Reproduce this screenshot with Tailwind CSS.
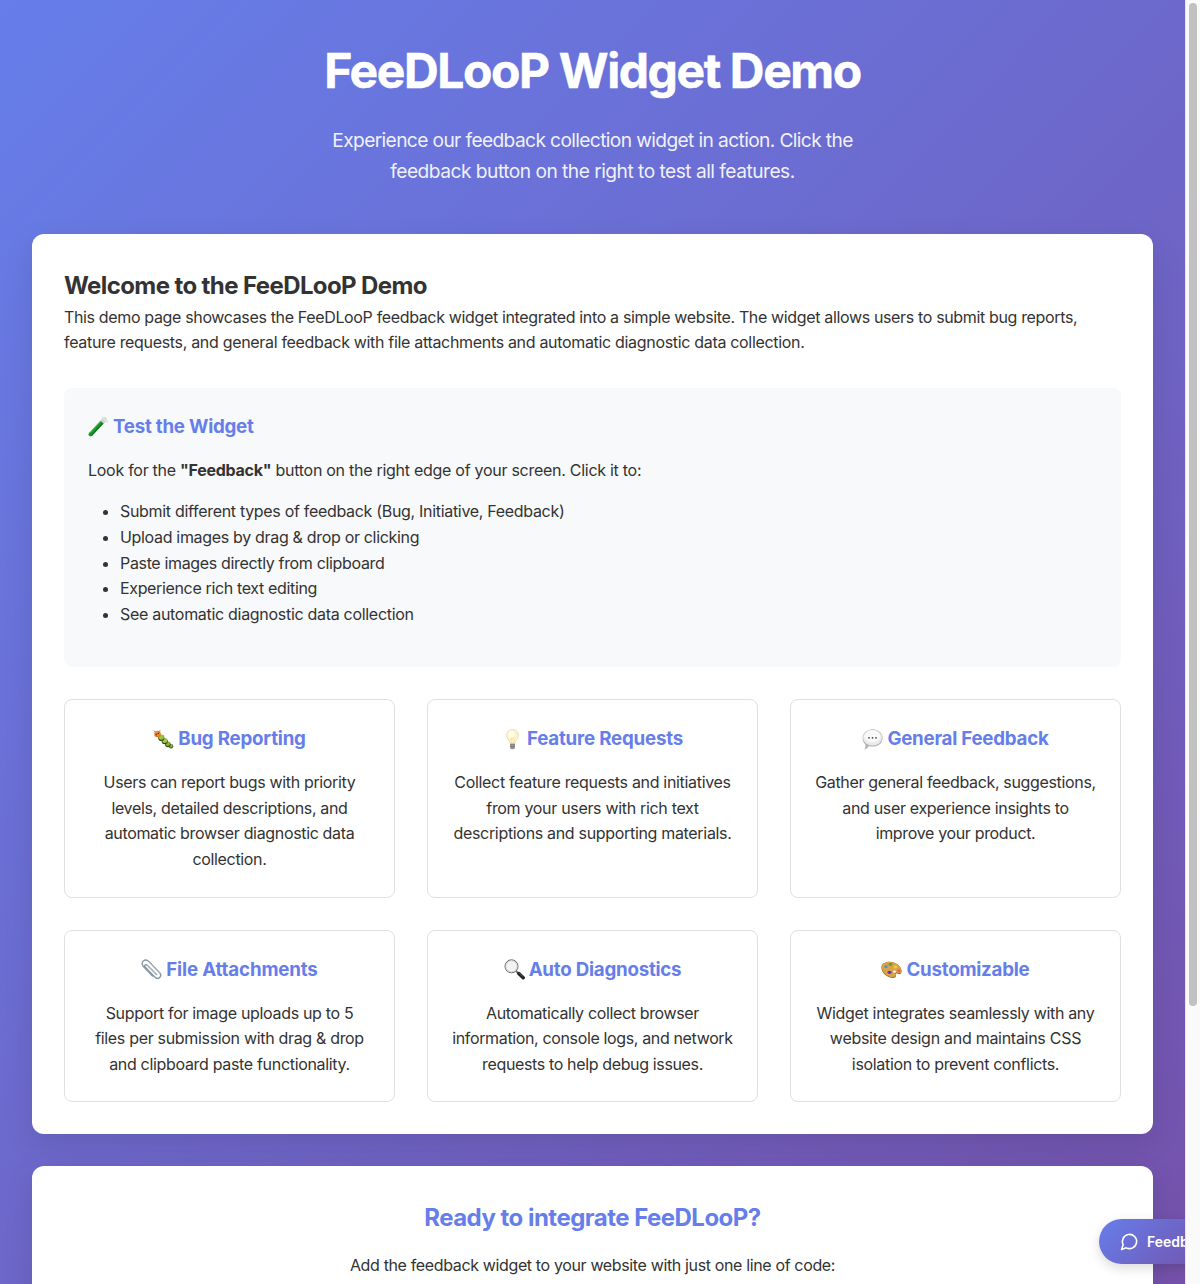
<!DOCTYPE html>
<html lang="en">
<head>
<meta charset="utf-8">
<title>FeeDLooP Widget Demo</title>
<script src="https://cdn.jsdelivr.net/npm/@tailwindcss/browser@4"></script>
</head>
<body class="flex h-[1284px] w-[1200px] overflow-hidden font-['Inter',sans-serif] text-base leading-[25.6px] tracking-[-0.32px] text-[#333]">
<div class="relative h-[1284px] w-[1185px] overflow-hidden">
<div class="h-[1640px] bg-[linear-gradient(135deg,#667eea_0%,#764ba2_100%)] p-8">
  <header class="mb-12 text-center text-white">
    <h1 class="mb-[15px] pt-px text-[48px] leading-[76.8px] font-bold tracking-[-1.4px] whitespace-nowrap [-webkit-text-stroke:0.5px_white]">FeeDLooP Widget Demo</h1>
    <p class="text-[19.2px] leading-[30.72px] tracking-[-0.63px] whitespace-nowrap opacity-90">Experience our feedback collection widget in action. Click the<br><span class="tracking-[-0.52px]">feedback button on the right to test all features.</span></p>
  </header>

  <main class="mb-8 rounded-xl bg-white p-8 shadow-[0_10px_30px_rgba(0,0,0,0.1)]">
    <h2 class="-mb-px pt-px text-2xl leading-[38.4px] font-bold tracking-[-0.6px]">Welcome to the FeeDLooP Demo</h2>
    <p class="whitespace-nowrap"><span class="tracking-[-0.35px]">This demo page showcases the FeeDLooP feedback widget integrated into a simple website. The widget allows users to submit bug reports,</span><br>feature requests, and general feedback with file attachments and automatic diagnostic data collection.</p>

    <section class="my-8 rounded-lg bg-[#f8f9fb] p-6">
      <h3 class="mb-4 flex items-center gap-[4px] text-[18.72px] leading-[29.95px] font-bold tracking-[-0.23px] text-[#667eea]">
        <svg class="size-[21px]" viewBox="0 0 21 21"><path d="M2.600 18.400 16.500 3.500" stroke="#ccd6d1" stroke-width="4.600" stroke-linecap="round"/><path d="M2.700 18.300 14 6.200" stroke="#179325" stroke-width="4"/><circle cx="2.700" cy="18.300" r="2" fill="#179325"/><path d="M1.900 16.800 12.800 5.200" stroke="#6bd066" stroke-width=".9"/><path d="M3.800 19.200 15 7.200" stroke="#0a6718" stroke-width="1"/><path d="m14.500 1.500 4.800 4.500" stroke="#dfe4df" stroke-width="1.800" stroke-linecap="round"/></svg>
        <span>Test the Widget</span>
      </h3>
      <p class="mb-4 tracking-[-0.275px]">Look for the <strong class="font-bold">"Feedback"</strong> button on the right edge of your screen. Click it to:</p>
      <ul class="mb-4 list-disc pl-8">
        <li class="tracking-[-0.31px]">Submit different types of feedback (Bug, Initiative, Feedback)</li>
        <li>Upload images by drag &amp; drop or clicking</li>
        <li class="tracking-[-0.34px]">Paste images directly from clipboard</li>
        <li class="tracking-[-0.35px]">Experience rich text editing</li>
        <li class="tracking-[-0.3px]">See automatic diagnostic data collection</li>
      </ul>
    </section>

    <div class="grid grid-cols-3 gap-8 text-center tracking-[-0.34px] whitespace-nowrap">
      <article class="rounded-lg border border-[#e0e0e0] p-6">
        <h3 class="mb-4 flex items-center justify-center gap-[4px] text-[18.72px] leading-[29.95px] font-bold tracking-[-0.2px] text-[#667eea]">
          <svg class="size-[21px]" viewBox="0 0 21 21" fill="none"><path d="M2.500 3 .8 1.800M5.600 2.500 7.400 1.500" stroke="#554" stroke-width=".7"/><circle cx="18" cy="17.300" r="2.200" fill="#3a5a1c"/><circle cx="17.800" cy="16.700" r="1.800" fill="#9cb83a"/><circle cx="14.900" cy="15.500" r="2.800" fill="#304e18"/><circle cx="14.800" cy="14.800" r="2.300" fill="#8bb22e"/><circle cx="11.700" cy="12.300" r="3" fill="#2b4715"/><circle cx="11.700" cy="11.500" r="2.500" fill="#a4c746"/><circle cx="8.300" cy="8.900" r="3.100" fill="#365519"/><circle cx="8.300" cy="8.100" r="2.600" fill="#a1c33e"/><circle cx="4.500" cy="5" r="3.200" fill="#d87819"/><circle cx="4.300" cy="4.700" r="2.400" fill="#f29a28"/><circle cx="3.300" cy="5.500" r="1" fill="#b53218"/><circle cx="5.300" cy="4.400" r=".8" fill="#73240e"/></svg>
          <span>Bug Reporting</span>
        </h3>
        <p>Users can report bugs with priority<br>levels, detailed descriptions, and<br>automatic browser diagnostic data<br>collection.</p>
      </article>
      <article class="rounded-lg border border-[#e0e0e0] p-6">
        <h3 class="mb-4 flex items-center justify-center gap-[4px] text-[18.72px] leading-[29.95px] font-bold tracking-[-0.2px] text-[#667eea]">
          <svg class="size-[21px]" viewBox="0 0 21 21"><path d="M8 14.500C8 11 4.600 10 4.600 6.200a5.900 5.900 0 0 1 11.800 0c0 3.800-3.400 4.800-3.400 8.300z" fill="#fff3c8" stroke="#ead9a2" stroke-width=".8"/><path d="M9.500 14 8.900 9l1.600 1L12.100 9l-.6 5" fill="none" stroke="#efd083" stroke-width=".5"/><ellipse cx="9.500" cy="5.500" rx="3" ry="3.300" fill="#fffdf0"/><path d="M8 14.500h5v4l-1.200 1.700H9.200L8 18.500z" fill="#aaa"/><path d="M8 15.800h5M8 17.400h5M8.400 19h4.200" stroke="#666" stroke-width=".7"/></svg>
          <span>Feature Requests</span>
        </h3>
        <p class="tracking-[-0.32px]">Collect feature requests and initiatives<br>from your users with rich text<br>descriptions and supporting materials.</p>
      </article>
      <article class="rounded-lg border border-[#e0e0e0] p-6">
        <h3 class="mb-4 flex items-center justify-center gap-[4px] text-[18.72px] leading-[29.95px] font-bold tracking-[-0.23px] text-[#667eea]">
          <svg class="size-[21px]" viewBox="0 0 21 21"><path d="M10.700.3c5.400 0 9.900 3.700 9.900 8.700s-4.400 8.600-9.900 8.600c-1.400 0-2.700-.2-3.800-.6-1 1.700-2.400 2.900-4.400 3.400.8-1.300 1.200-3 .9-4.900C1.700 14 .6 11.700.6 9 .6 4 5.200.3 10.700.3z" fill="#b2b2b2"/><ellipse cx="10.500" cy="8.700" rx="9.400" ry="7.900" fill="#ebebeb"/><ellipse cx="10.300" cy="7.300" rx="7.900" ry="6" fill="#f9f9f9"/><g fill="#444"><circle cx="7" cy="8.800" r=".9"/><circle cx="10.500" cy="8.800" r=".9"/><circle cx="14" cy="8.800" r=".9"/></g></svg>
          <span>General Feedback</span>
        </h3>
        <p>Gather general feedback, suggestions,<br>and user experience insights to<br>improve your product.</p>
      </article>
      <article class="rounded-lg border border-[#e0e0e0] p-6">
        <h3 class="mb-4 flex items-center justify-center gap-[4px] text-[18.72px] leading-[29.95px] font-bold tracking-[-0.15px] text-[#667eea]">
          <svg class="size-[21px]" viewBox="0 0 21 21" fill="none" stroke-linecap="round"><path d="M15.500 15.500 6.300 6.300c-1.600-1.500-3.500.3-2 1.900l9.400 9.900c3.400 3.200 8-.8 4.900-4.500L8 2.700C4-1.100-1.200 3.200 2.200 7.200l9.300 9.700" stroke="#8796a3" stroke-width="1.400"/><path d="M15.200 15.200 6 6M7.700 2.900 18 13.600" stroke="#cbd4da" stroke-width=".5"/></svg>
          <span>File Attachments</span>
        </h3>
        <p class="tracking-[-0.32px]">Support for image uploads up to 5<br>files per submission with drag &amp; drop<br>and clipboard paste functionality.</p>
      </article>
      <article class="rounded-lg border border-[#e0e0e0] p-6">
        <h3 class="mb-4 flex items-center justify-center gap-[4px] text-[18.72px] leading-[29.95px] font-bold tracking-[-0.23px] text-[#667eea]">
          <svg class="size-[21px]" viewBox="0 0 21 21"><path d="m12 12 3 3" stroke="#777" stroke-width="1.800"/><path d="m14.800 14.500 4.400 4.300" stroke="#222" stroke-width="3.400" stroke-linecap="round"/><path d="m15.300 14 3.500 3.500" stroke="#777" stroke-width=".7"/><circle cx="7.500" cy="7.300" r="6.500" fill="#f1f3f4" stroke="#666" stroke-width="1"/><circle cx="7.500" cy="7.300" r="5.600" fill="none" stroke="#c9cccd" stroke-width=".7"/></svg>
          <span>Auto Diagnostics</span>
        </h3>
        <p class="tracking-[-0.36px]">Automatically collect browser<br>information, console logs, and network<br>requests to help debug issues.</p>
      </article>
      <article class="rounded-lg border border-[#e0e0e0] p-6">
        <h3 class="mb-4 flex items-center justify-center gap-[4px] text-[18.72px] leading-[29.95px] font-bold tracking-[-0.23px] text-[#667eea]">
          <svg class="size-[21px]" viewBox="0 0 21 21"><path d="M.4 8.500C.4 5 4 2.800 8.500 2.800c6 0 12.100 4.400 12.100 9.500 0 2.800-2.100 3.300-3.800 2.500-1.500-.8-2.800-.3-2.100 1.200.8 1.700-.3 2.900-2.700 2.900C6.200 18.900.4 14 .4 8.500z" fill="#9d642a"/><path d="M.7 8C.7 4.900 4.200 2.900 8.500 2.900c5.800 0 11.800 4.200 11.800 8.900 0 2.400-1.800 2.800-3.500 2-1.900-.9-3.500-.2-2.700 1.700.6 1.500-.3 2.600-2.400 2.600C6.400 18.100.7 13.300.7 8z" fill="#dba24e"/><ellipse cx="5" cy="7.700" rx="1.600" ry="1.400" fill="#399bd2"/><ellipse cx="9.500" cy="5.400" rx="1.900" ry="1.400" fill="#48a62f"/><ellipse cx="14.500" cy="8" rx="1.900" ry="1.400" fill="#f0cc34"/><ellipse cx="17.900" cy="11.700" rx="1.500" ry="1.300" fill="#ee5a44"/><ellipse cx="8.500" cy="13.300" rx="2" ry="1.600" fill="#6a35a3"/><ellipse cx="13.500" cy="12.600" rx="1.500" ry="1.200" fill="#fff"/></svg>
          <span>Customizable</span>
        </h3>
        <p class="tracking-[-0.33px]">Widget integrates seamlessly with any<br><span class="tracking-[-0.28px]">website design and maintains CSS</span><br>isolation to prevent conflicts.</p>
      </article>
    </div>
  </main>

  <section class="rounded-xl bg-white p-8 pb-60 text-center shadow-[0_10px_30px_rgba(0,0,0,0.1)]">
    <h2 class="mb-[15px] pt-px text-2xl leading-[38.4px] font-bold tracking-[-0.52px] text-[#667eea]">Ready to integrate FeeDLooP?</h2>
    <p class="tracking-[-0.36px]">Add the feedback widget to your website with just one line of code:</p>
  </section>
</div>

<button class="absolute top-[1219px] left-[1099px] flex h-[45px] w-[138px] items-center gap-2 rounded-full bg-[linear-gradient(135deg,#667eea_0%,#764ba2_100%)] pl-[21px] text-sm font-semibold tracking-normal whitespace-nowrap text-white shadow-[0_4px_12px_rgba(0,0,0,0.15)]">
  <svg class="size-[19px] shrink-0" viewBox="0 0 24 24" fill="none" stroke="currentColor" stroke-width="2" stroke-linecap="round" stroke-linejoin="round"><path d="M7.900 20A9 9 0 1 0 4 16.100L2 22Z"/></svg>
  <span>Feedback</span>
</button>
</div>

<div class="h-[1284px] w-[15px] border-l border-[#e8e8e8] bg-[#fafafa] pt-[3px] pl-[3px]">
  <div class="h-[1003px] w-2 rounded-full bg-[#c1c1c1]"></div>
</div>
</body>
</html>
